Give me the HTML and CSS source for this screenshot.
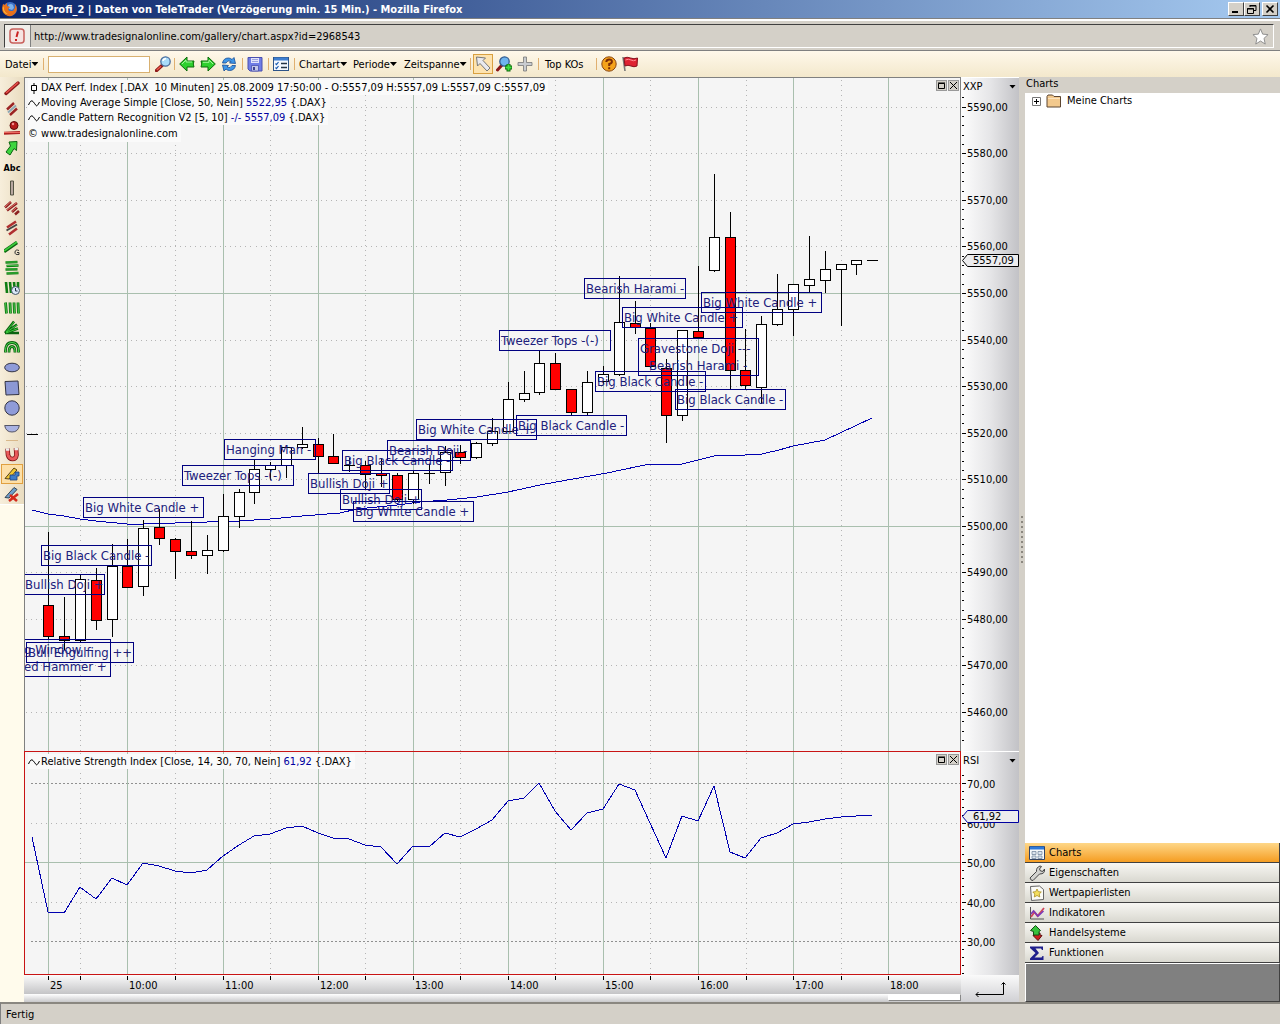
FILE: index.html
```html
<!DOCTYPE html>
<html lang="de">
<head>
<meta charset="utf-8">
<title>Dax_Profi_2 | Daten von TeleTrader</title>
<link rel="stylesheet" href="styles.css">
</head>
<body>
<header class="titlebar">
  <svg class="ico" viewBox="0 0 16 16"><circle cx="8" cy="8" r="7" fill="#3d6fc4"/><path d="M6 4q3-2 5 0l1 3-2 2-3-1z" fill="#7db2ec"/><path d="M1 3l2 1 2-2 0 3 3 1-2 2 1 2 4 0 2-3 0-4q3 4 1 8-3 5-8 4-6-2-6-8z" fill="#e8701a"/><path d="M2 5q-1 6 4 8-5 0-5-6z" fill="#f9c13c"/></svg>
  <h1 class="titlebar-text">Dax_Profi_2 | Daten von TeleTrader (Verzögerung min. 15 Min.) - Mozilla Firefox</h1>
  <button class="winbtn" aria-label="Minimieren"><svg viewBox="0 0 12 10"><path d="M2 8h6" stroke="#000" stroke-width="2"/></svg></button>
  <button class="winbtn" aria-label="Verkleinern"><svg viewBox="0 0 12 10"><path d="M4 1.500h6v5h-2M4 1v2M4 2h6M1.500 4.500h6v5h-6zM1 5h7" fill="none" stroke="#000"/></svg></button>
  <button class="winbtn winbtn-close" aria-label="Schließen"><svg viewBox="0 0 12 10"><path d="M2.500 1.500l7 7M9.500 1.500l-7 7" stroke="#000" stroke-width="1.600"/></svg></button>
</header>

<div class="location">
  <div class="location-box">
    <span class="location-icon"><svg class="ico" viewBox="0 0 16 16"><rect x="1" y="1" width="14" height="14" rx="3" fill="#f6e4e2" stroke="#c8605c" stroke-width="1.500"/><path d="M9 3.500L7.500 9M7 11v2" stroke="#c22" stroke-width="2"/></svg></span>
    <input class="location-input" type="text" aria-label="Adresse" value="http://www.tradesignalonline.com/gallery/chart.aspx?id=2968543">
    <svg class="star" viewBox="0 0 18 18"><path d="M9 1l2.300 5.500 5.700.5-4.300 4 1.300 6L9 13.800 4 17l1.300-6L1 7l5.700-.5z" fill="#fff" stroke="#8b8b8b"/></svg>
  </div>
</div>

<nav class="toolbar">
  <button class="menu menu-file">Datei<i class="caret"></i></button>
  <i class="sep"></i>
  <input class="search" type="text" aria-label="Suche">
  <button class="tool" aria-label="Suchen"><svg class="ico" viewBox="0 0 16 16"><path d="M1.500 14.500L7 9.500" stroke="#8c1818" stroke-width="3.400" stroke-linecap="round"/><path d="M1.800 14L6 10.200" stroke="#ee5a4a" stroke-width="1.400"/><circle cx="10.500" cy="5.500" r="4.700" fill="#a8dcfa" stroke="#4a6c9c" stroke-width="1.300"/><path d="M8 5q0-2 3-2.500" stroke="#fff" stroke-width="1.500" fill="none"/></svg></button>
  <i class="sep sep-tight"></i>
  <button class="tool" aria-label="Zurück"><svg class="ico" viewBox="0 0 16 16"><path d="M.7 8L8 1v4h7q-1.500 3 0 6H8v4z" fill="#2fd02f" stroke="#0a6a0a"/><path d="M3 8l4-4v2h6" stroke="#a4f59c" fill="none"/></svg></button>
  <button class="tool" aria-label="Vor"><svg class="ico" viewBox="0 0 16 16"><path d="M15.300 8L8 1v4H1q1.500 3 0 6h7v4z" fill="#2fd02f" stroke="#0a6a0a"/><path d="M3 6.300h6V4l4 4" stroke="#a4f59c" fill="none"/></svg></button>
  <button class="tool" aria-label="Aktualisieren"><svg class="ico" viewBox="0 0 16 16"><path d="M1.500 7q1-5 6-5 2 0 3.500 1.500L13 1.500 14.500 7.500 8.500 7l1.500-1.500q-3.500-2-5 1.500z" fill="#3d96e8" stroke="#154a94" stroke-width=".8"/><path d="M14.500 9.500q-1 5-6 5-2 0-3.500-1.500L3 15 1.500 9l6 .5L6 11q3.500 2 5-1.500z" fill="#3d96e8" stroke="#154a94" stroke-width=".8"/></svg></button>
  <i class="sep"></i>
  <button class="tool" aria-label="Speichern"><svg class="ico" viewBox="0 0 16 16"><path d="M1 1.500h14V15H3l-2-2z" fill="#6f7de6" stroke="#4a50b0"/><path d="M4 2h8v5H4z" fill="#e2e4fa"/><path d="M4.500 9.500h7V15h-7z" fill="#c4c8e8" stroke="#4a50b0" stroke-width=".8"/><path d="M6 11h2v3H6z" fill="#3c4090"/><path d="M5 3.500h6M5 5.500h6" stroke="#9ba2e0"/></svg></button>
  <i class="sep"></i>
  <button class="tool" aria-label="Liste"><svg class="ico" viewBox="0 0 16 16"><rect x=".5" y="1.500" width="15" height="13" fill="#f4f8fe" stroke="#2d5488"/><path d="M1 3h14" stroke="#3f7fd0" stroke-width="3"/><path d="M2.500 7.500l1 1 2-2.500M2.500 11.500l1 1 2-2.500" fill="none" stroke="#175ab0" stroke-width="1.200"/><path d="M8 7.500h6M8 11.500h6" stroke="#234" stroke-width="1.300"/></svg></button>
  <i class="sep"></i>
  <button class="menu menu-type">Chartart<i class="caret"></i></button>
  <button class="menu menu-period">Periode<i class="caret"></i></button>
  <button class="menu menu-span">Zeitspanne<i class="caret"></i></button>
  <i class="sep"></i>
  <button class="tool tool-on" aria-label="Zeiger"><svg class="ico" viewBox="0 0 16 16"><path d="M1.500 1l9 1-2.500 2.500 7 7.500-3 3-7-7.500L2.500 10z" fill="#e9e9ee" stroke="#777"/></svg></button>
  <button class="tool" aria-label="Vergrößern"><svg class="ico" viewBox="0 0 16 16"><path d="M1.500 14L6 9" stroke="#8c1818" stroke-width="3" stroke-linecap="round"/><circle cx="8.500" cy="5.500" r="4.700" fill="#6fb4ee" stroke="#345c90" stroke-width="1.300"/><path d="M9 11.500h7M12.500 8v7.500" stroke="#0a6a0a" stroke-width="4"/><path d="M9.500 11.500h6M12.500 8.500v6" stroke="#43e043" stroke-width="2"/></svg></button>
  <button class="tool" aria-label="Fadenkreuz"><svg class="ico" viewBox="0 0 16 16"><path d="M6.500 1h3v5.500H15v3H9.500V15h-3V9.500H1v-3h5.500z" fill="#c9ccd0" stroke="#777" stroke-width=".8"/></svg></button>
  <i class="sep"></i>
  <button class="menu menu-kos">Top KOs</button>
  <i class="sep"></i>
  <button class="tool" aria-label="Hilfe"><svg class="ico" viewBox="0 0 16 16"><circle cx="8" cy="8" r="7.200" fill="#f5a31b" stroke="#8a4510"/><path d="M5.300 6q.2-2.500 2.900-2.500t2.700 2.200Q10.900 7.300 8.200 8v2M8.200 11.300v2" fill="none" stroke="#7c2c06" stroke-width="2"/></svg></button>
  <button class="tool" aria-label="Markieren"><svg class="ico" viewBox="0 0 16 16"><path d="M1 1l2 14" stroke="#777" stroke-width="1.600"/><path d="M2 2q3-1.500 6.500 0t7 0l-.5 8q-3 1.500-6 0t-6 0z" fill="#df2333" stroke="#86101c"/><path d="M3.500 4q3-1.500 5.500 0t5 0" stroke="#ff8d93" fill="none"/></svg></button>
</nav>

<main class="workspace">
  <aside class="tools">
    <div class="tools-list">
      <button class="draw" aria-label="Trendlinie"><svg class="ico" viewBox="0 0 16 16"><path d="M2 13.500L14 3" stroke="#8c1a1a" stroke-width="3.400" stroke-linecap="round"/><path d="M2 13L14 2.500" stroke="#e8504a" stroke-width="1.600"/></svg></button>
      <button class="draw" aria-label="Parallelen"><svg class="ico" viewBox="0 0 16 16"><path d="M3 9.500L10 3M6 15l7-6.500" stroke="#9c2424" stroke-width="2.400"/><path d="M4 12.500l8-7" stroke="#8fa8b4" stroke-width="2"/></svg></button>
      <button class="draw" aria-label="Horizontale"><svg class="ico" viewBox="0 0 16 16"><circle cx="10" cy="5.500" r="4" fill="#b61c1c" stroke="#5c0a0a"/><circle cx="9" cy="4" r="1.200" fill="#f09090"/><path d="M0 13.200l16-.7" stroke="#b02222" stroke-width="3"/><path d="M0 12.500h16" stroke="#ec6a60"/></svg></button>
      <button class="draw" aria-label="Pfeil"><svg class="ico" viewBox="0 0 16 16"><path d="M5 2l8-.5-.5 9-2.500-2L6 15l-4-3 4.500-6z" fill="#3ed63e" stroke="#0b6410"/></svg></button>
      <button class="draw draw-text">Abc</button>
      <button class="draw" aria-label="Vertikale"><svg class="ico" viewBox="0 0 16 16"><path d="M6.500 1h3v14h-3z" fill="#b8a8a0" stroke="#554"/></svg></button>
      <button class="draw" aria-label="Kanal"><svg class="ico" viewBox="0 0 16 16"><path d="M1 7.500L7 2M3 10.500L13 3M8 12l5-4.500M11 14.500l4-3.500" stroke="#8c2020" stroke-width="2.600"/><path d="M1 7L7 1.500M3 10L13 2.500M8 11.500L13 7" stroke="#e07068"/></svg></button>
      <button class="draw" aria-label="Regression"><svg class="ico" viewBox="0 0 16 16"><path d="M3 7.500L12 1.500M5 14.500l8-6" stroke="#b03030" stroke-width="2.600"/><path d="M2.500 10.500L13 4.500" stroke="#444" stroke-width="2"/></svg></button>
      <button class="draw" aria-label="Gann"><svg class="ico" viewBox="0 0 16 16"><path d="M0 11.500L13 2.500" stroke="#0b6410" stroke-width="3.600"/><path d="M0 11L13 2" stroke="#3ccc3c" stroke-width="1.600"/><path d="M15 10.500q-3.500-1.500-4 1.500t4 2.500v-2h-2" fill="none" stroke="#333"/></svg></button>
      <button class="draw" aria-label="Retracement"><svg class="ico" viewBox="0 0 16 16"><path d="M1.500 2.500l12-.5M2.500 6l12-.5M1.500 9.500l12-.3M2.500 13.500l12-.5" stroke="#0f7d14" stroke-width="2.600"/><path d="M2 2h11M2.500 5.500H14M2 9h11M3 13h11" stroke="#4fc84f" stroke-width=".8"/></svg></button>
      <button class="draw" aria-label="Zeitzonen"><svg class="ico" viewBox="0 0 16 16"><path d="M2 2l1 11M6 2l1 11M10 2l1 11M14 2v6" stroke="#0f7d14" stroke-width="2.600"/><circle cx="11.500" cy="10.500" r="4" fill="#dbe8f8" stroke="#456"/><path d="M11.500 8v3h2" stroke="#234" fill="none"/></svg></button>
      <button class="draw" aria-label="Zyklen"><svg class="ico" viewBox="0 0 16 16"><path d="M1.500 2.500l1 11M6 2.500l.5 11M10 2.500l.5 11M14 2.500l.5 11" stroke="#0f7d14" stroke-width="2.800"/><path d="M1.500 3l1 10M6 3l.5 10M10 3l.5 10M14 3l.5 10" stroke="#4fc84f" stroke-width=".9"/></svg></button>
      <button class="draw" aria-label="Fächer"><svg class="ico" viewBox="0 0 16 16"><path d="M1 13L10 1.500M1 13L13 4.500M1 13l13-4.500M1 13h14" stroke="#0b6410" stroke-width="2.600"/><path d="M2 12L10 2M2 12.500L13 5M2 13l12-4.500" stroke="#3ccc3c"/></svg></button>
      <button class="draw" aria-label="Bögen"><svg class="ico" viewBox="0 0 16 16"><path d="M1.500 12.500q-.5-10 6.500-10t6.500 10M5 12.500q0-6 3-6t3 6" fill="none" stroke="#0b6410" stroke-width="2.800"/><path d="M1.500 12q-.5-9.500 6.500-9.500T14.500 12M5 12q0-5.500 3-5.500t3 5.500" fill="none" stroke="#4fd44f"/></svg></button>
      <button class="draw" aria-label="Ellipse"><svg class="ico" viewBox="0 0 16 16"><ellipse cx="8" cy="7.500" rx="7.300" ry="4.300" fill="#8f9bd8" stroke="#334"/></svg></button>
      <button class="draw" aria-label="Rechteck"><svg class="ico" viewBox="0 0 16 16"><path d="M1 1.500l13-.5 1 13.500-13 .5z" fill="#8c98d4" stroke="#334"/></svg></button>
      <button class="draw" aria-label="Kreis"><svg class="ico" viewBox="0 0 16 16"><circle cx="8" cy="8" r="7.200" fill="#8f9bd8" stroke="#334"/></svg></button>
      <button class="draw" aria-label="Halbkreis"><svg class="ico" viewBox="0 0 16 16"><path d="M.7 5.500h14.600q-1 6.500-7.300 6.500T.7 5.500z" fill="#a9b2e2" stroke="#556"/></svg></button>
      <i class="tools-sep"></i>
      <button class="draw" aria-label="Magnet"><svg class="ico" viewBox="0 0 16 16"><path d="M3.500 2.500l.5 6.500q1 4 4.500 4t4-4l-.5-7" fill="none" stroke="#7c1212" stroke-width="4.600"/><path d="M3.500 4l.5 5q1 4 4.500 4t4-4l-.5-6" fill="none" stroke="#ea5a5a" stroke-width="3"/><path d="M1.800 3.500h3.600M10.500 3h3.600" stroke="#eee" stroke-width="2.600"/></svg></button>
      <button class="draw draw-on" aria-label="Zeichnen"><svg class="ico" viewBox="0 0 16 16"><path d="M1 12.500L10 2l3 2L5 13z" fill="#f2c630" stroke="#54431a"/><path d="M6 9h5V6h4v4h-2v4H6z" fill="#3f7cc8" stroke="#1c3f78" stroke-width=".8"/></svg></button>
      <button class="draw" aria-label="Löschen"><svg class="ico" viewBox="0 0 16 16"><path d="M1 11.500L10 1.500l3 2L5 12z" fill="#6fa0cc" stroke="#345"/><path d="M6 9l7 6M14 8l-9 7" stroke="#d42a1c" stroke-width="2.600"/></svg></button>
    </div>
  </aside>

  <section class="charts">
    <div class="pane">
      <svg class="plot" id="price-plot"></svg>
      <div class="pane-head">
        <div class="legend">
          <p class="legend-row"><svg class="mark" viewBox="0 0 12 12"><path d="M6 1v2M6 9v3M3.500 3.500h5v5h-5z" fill="none" stroke="#000"/></svg><span>DAX Perf. Index [.DAX&nbsp; 10 Minuten] 25.08.2009 17:50:00 - O:5557,09 H:5557,09 L:5557,09 C:5557,09</span></p>
          <p class="legend-row"><svg class="mark" viewBox="0 0 12 12"><path d="M.5 8Q3 2 5 4.500T8 8.500 11.500 5" fill="none" stroke="#000"/></svg><span>Moving Average Simple [Close, 50, Nein] <b class="val">5522,95</b> {.DAX}</span></p>
          <p class="legend-row"><svg class="mark" viewBox="0 0 12 12"><path d="M.5 8Q3 2 5 4.500T8 8.500 11.500 5" fill="none" stroke="#000"/></svg><span>Candle Pattern Recognition V2 [5, 10] <b class="val">-/- 5557,09</b> {.DAX}</span></p>
          <p class="legend-row legend-copy">© www.tradesignalonline.com</p>
        </div>
        <div class="pane-btns">
          <button class="panebtn" aria-label="Maximieren"><svg viewBox="0 0 9 9"><path d="M1.500 2.500h6v5h-6zM1 2h7" fill="none" stroke="#000"/></svg></button>
          <button class="panebtn" aria-label="Schließen"><svg viewBox="0 0 9 9"><path d="M1 1l7 7M8 1l-7 7" stroke="#000"/></svg></button>
        </div>
      </div>
    </div>
    <div class="scale">
      <svg class="plot" id="price-scale"></svg>
      <button class="scale-head">XXP<i class="caret"></i></button>
    </div>
    <div class="pane pane-active">
      <svg class="plot" id="rsi-plot"></svg>
      <div class="pane-head">
        <div class="legend">
          <p class="legend-row"><svg class="mark" viewBox="0 0 12 12"><path d="M.5 8Q3 2 5 4.500T8 8.500 11.500 5" fill="none" stroke="#000"/></svg><span>Relative Strength Index [Close, 14, 30, 70, Nein] <b class="val">61,92</b> {.DAX}</span></p>
        </div>
        <div class="pane-btns">
          <button class="panebtn" aria-label="Maximieren"><svg viewBox="0 0 9 9"><path d="M1.500 2.500h6v5h-6zM1 2h7" fill="none" stroke="#000"/></svg></button>
          <button class="panebtn" aria-label="Schließen"><svg viewBox="0 0 9 9"><path d="M1 1l7 7M8 1l-7 7" stroke="#000"/></svg></button>
        </div>
      </div>
    </div>
    <div class="scale">
      <svg class="plot" id="rsi-scale"></svg>
      <button class="scale-head">RSI<i class="caret"></i></button>
    </div>
    <div class="time">
      <svg class="time-axis" id="time-axis"></svg>
      <div class="time-scroll"><i class="time-thumb"></i></div>
    </div>
    <div class="corner"><svg viewBox="0 0 32 18"><path d="M29.500 3v11.500H2M27.500 4.500l2-2 2 2M4.500 12L2 14.500 4.500 17" fill="none" stroke="#000"/></svg></div>
  </section>

  <div class="splitter"><i class="grip"></i></div>

  <aside class="dock">
    <h2 class="dock-head">Charts</h2>
    <div class="tree">
      <button class="expander" aria-label="Aufklappen"><svg viewBox="0 0 9 9"><path d="M.5.5h8v8h-8z" fill="#fff" stroke="#777"/><path d="M2 4.500h5M4.500 2v5" stroke="#000"/></svg></button>
      <svg class="ico" viewBox="0 0 16 14"><path d="M1 13V2.500L2 1h4.500L8 2.500h6.500V13z" fill="#f3c98d" stroke="#5c4632"/><path d="M2 4.500h12" stroke="#fbe3bf"/></svg>
      <span>Meine Charts</span>
    </div>
    <div class="dock-menu">
      <button class="item item-on"><svg class="ico" viewBox="0 0 16 16"><path d="M.5 1.500h15v13H.5z" fill="#f6f8fb" stroke="#346"/><path d="M1 3h14" stroke="#2d78d8" stroke-width="3"/><path d="M3 6.500h4v3H3zM9 6.500h4v3H9zM3 11h4v2.500H3zM9 11h4v2.500H9z" fill="#dde4ee" stroke="#788aa2" stroke-width=".8"/></svg>Charts</button>
      <button class="item"><svg class="ico" viewBox="0 0 16 16"><path d="M1 13l6.500-6.500Q7 2.500 11 1l1.500.5-2 2.500 1 2 2.500.3L15.500 4q.8 5-5 5L4 15.500q-2 .5-3-2.500z" fill="#d3d3d0" stroke="#444"/></svg>Eigenschaften</button>
      <button class="item"><svg class="ico" viewBox="0 0 16 16"><path d="M1.500 1.500l9-.5 4 3.500v10l-12 1z" fill="#fbfbf6" stroke="#666"/><path d="M8 4l1.300 2.700 3 .3-2.100 2 .6 3L8 10.500 5.300 12l.5-3-2-2 2.900-.3z" fill="#f5df5e" stroke="#a98e22" stroke-width=".8"/></svg>Wertpapierlisten</button>
      <button class="item"><svg class="ico" viewBox="0 0 16 16"><path d="M1.500 2v12H15" stroke="#555" fill="none"/><path d="M2 12l3.500-5 3 4L15 3" fill="none" stroke="#d0455a" stroke-width="1.800"/><path d="M2 9l2.500-3L9 11l5.500-5" fill="none" stroke="#7a3ab8" stroke-width="1.600"/></svg>Indikatoren</button>
      <button class="item"><svg class="ico" viewBox="0 0 16 16"><path d="M4 10.500l2-.5V8h5v2l2 .5-4 5z" fill="#cc2020" stroke="#5c0d0d"/><path d="M1.500 5.500l5-5 5 5-1.500 1v3.500H4.500V6.500z" fill="#37c23c" stroke="#124f14"/></svg>Handelsysteme</button>
      <button class="item"><svg class="ico" viewBox="0 0 16 16"><path d="M1 1.500h13V5h-1l-1-1.500H6.500L10 8l-4.500 4.500H12.500L13.500 11h1v4H1v-1.500L6.500 8 1 3z" fill="#1f1f8c"/></svg>Funktionen</button>
    </div>
    <div class="dock-foot"></div>
  </aside>
</main>

<footer class="status">Fertig</footer>
<script src="chart.js"></script>
</body>
</html>
```
FILE: styles.css
```css
* { box-sizing: border-box; }
body {
  margin: 0;
  min-height: 100vh;
  display: flex;
  flex-direction: column;
  background: #d4d0c8;
  color: #000;
  font: 11px/15px "DejaVu Sans Condensed", "DejaVu Sans", sans-serif;
}
button, input { font: inherit; color: inherit; }
button { display: flex; align-items: center; margin: 0; padding: 0; border: 0; background: none; }
h1, h2, p { margin: 0; font: inherit; }
.ico { width: 16px; height: 16px; flex: none; }

.titlebar {
  display: flex;
  align-items: center;
  height: 19px;
  padding: 0 2px;
  background: linear-gradient(90deg, #0a246a, #a6caf0);
  border-bottom: 1px solid #808080;
  color: #fff;
}
.titlebar-text { flex: 1; padding-left: 2px; font-weight: bold; white-space: nowrap; }
.winbtn {
  width: 16px;
  height: 14px;
  justify-content: center;
  background: #d4d0c8;
  border: 1px solid;
  border-color: #fff #404040 #404040 #fff;
}
.winbtn svg { width: 12px; height: 10px; }
.winbtn-close { margin-left: 2px; }

.location { padding: 3px 6px 2px 4px; height: 32px; border-top: 2px solid #fff; border-bottom: 1px solid #808080; }
.location-box {
  display: flex;
  align-items: center;
  height: 24px;
  padding-right: 4px;
  border: 1px solid;
  border-color: #404040 #fff #fff #404040;
}
.location-icon { display: flex; align-items: center; width: 26px; height: 22px; padding-left: 4px; background: #f0eeea; border-right: 1px solid #808080; }
.location-input { flex: 1; min-width: 0; height: 20px; padding: 0 3px; border: 0; background: transparent; }
.star { width: 17px; height: 17px; flex: none; }

.toolbar {
  display: flex;
  align-items: center;
  gap: 5px;
  height: 26px;
  padding-left: 5px;
  background: linear-gradient(#fff8ea, #f3e8cc);
}
.caret { width: 7px; height: 4px; background: #000; clip-path: polygon(0 0, 100% 0, 50% 100%); flex: none; }
.menu { gap: 0; white-space: nowrap; flex: none; }
.menu-file { width: 33px; }
.menu-type { width: 49px; }
.menu-period { width: 46px; }
.menu-span { width: 61px; }
.menu-kos { width: 44px; margin: 0 2px; }
.sep { width: 1px; height: 12px; margin-right: -1px; background: #e0b070; flex: none; }
.sep-tight { margin-left: -2px; }
.search { width: 102px; height: 17px; border: 1px solid #d8b070; background: #fff; }
.tool { flex: none; }
.tool-on { padding: 1px; margin: 0 -2px; border: 1px solid #d9a040; background: #fde3b0; }

.workspace { flex: 1; display: flex; min-height: 600px; }
.tools { width: 24px; background: #fffbec; }
.tools-list { padding-top: 1px; background: linear-gradient(90deg, #f7eedb, #e9dcc0); border-bottom: 1px solid #fff; }
.draw { width: 22px; height: 20px; margin-left: 1px; justify-content: center; }
.draw-text { font-size: 9px; font-weight: bold; }
.draw-on { border: 1px solid #e0a040; background: #fde0a8; }
.tools-sep { display: block; width: 12px; height: 1px; margin: 2px 6px 3px; background: #d8b88a; }

.charts {
  flex: 1;
  min-width: 0;
  display: grid;
  grid-template-columns: minmax(0, 1fr) 58px;
  grid-template-rows: minmax(0, 674fr) minmax(0, 224fr) 27px;
}
.pane { display: grid; min-height: 0; background: #f5f5f5; border: 1px solid #808080; border-bottom: 0; }
.pane-active { border: 1px solid #c81414; }
.plot, .pane-head, .scale-head { grid-area: 1 / 1; }
.plot { width: 100%; height: 100%; overflow: hidden; }
.pane-head { display: flex; justify-content: space-between; align-items: flex-start; padding: 2px 0 0 3px; }
.legend { display: flex; flex-direction: column; align-items: flex-start; }
.legend-row { display: flex; align-items: center; gap: 1px; height: 15px; padding-right: 3px; background: #fafafa; white-space: nowrap; }
.legend-copy { height: 17px; }
.mark { width: 12px; height: 12px; }
.val { font-weight: normal; color: #0000a0; }
.pane-btns { display: flex; gap: 1px; padding: 0 1px 0 0; }
.panebtn { width: 11px; height: 11px; justify-content: center; background: #d4d0c8; border: 1px solid #999; }
.panebtn svg { width: 9px; height: 9px; }

.scale { display: grid; min-height: 0; background: linear-gradient(90deg, #fdfdfd, #e6e6e8 50%, #c2c2c6); border-top: 1px solid #fff; }
.scale-head { align-self: start; justify-content: space-between; height: 17px; padding: 0 3px 0 2px; }
.time { min-width: 0; display: flex; flex-direction: column; }
.time-axis { width: 100%; height: 19px; background: linear-gradient(#fbfbfb, #c4c4c6); overflow: hidden; }
.time-scroll { display: flex; justify-content: flex-end; height: 8px; background: linear-gradient(#fff, #c8c8ca); }
.time-thumb { width: 73px; height: 7px; background: #fff; border: 1px solid #fff; border-bottom-color: #888; border-right-color: #888; }
.corner { display: flex; align-items: center; justify-content: center; background: linear-gradient(#fafafa, #d0d0d4); }
.corner svg { width: 32px; height: 18px; }

.splitter { width: 6px; display: flex; align-items: center; justify-content: center; background: #d4d0c8; }
.grip { width: 2px; height: 48px; background: repeating-linear-gradient(#8c8880 0 2px, transparent 2px 5px); }

.dock { width: 255px; display: flex; flex-direction: column; background: #fff; }
.dock-head { height: 16px; padding-left: 1px; line-height: 14px; background: #d4d0c8; }
.tree { flex: 1; display: flex; align-items: flex-start; gap: 5px; padding: 0 7px; line-height: 16px; }
.expander { height: 16px; }
.expander svg { width: 9px; height: 9px; }
.dock-menu { display: flex; flex-direction: column; }
.item {
  height: 20px;
  gap: 4px;
  padding: 0 4px;
  background: linear-gradient(#f8f7f3, #d9d8d0);
  border-bottom: 1px solid #404040;
  border-right: 1px solid #404040;
}
.item-on { background: linear-gradient(#fed788, #f59d22); }
.dock-foot { height: 39px; background: #808080; border: 1px solid #404040; border-top-color: #fff; border-left-color: #fff; }

.status { height: 22px; padding: 3px 6px 0 5px; border-top: 2px solid #8a8780; border-left: 1px solid #808080; }

.hair { shape-rendering: crispEdges; }
.grid-solid { fill: #a9bfae; }
.grid-dots { stroke: #b4b4b4; stroke-dasharray: 1 4; fill: none; }
.grid-limit { stroke: #909090; stroke-dasharray: 2 2; fill: none; }
.ink { fill: #000; }
.up { fill: #fff; }
.down { fill: #f00; }
.curve { fill: none; stroke: #0000b0; }
.tag-box { fill: none; stroke: #000080; }
.tag-text { fill: #20207c; font-size: 13px; }
.axis-text { font-size: 11px; }
.flag { fill: #ececee; stroke: #000; }
.flag-rsi { stroke: #0000a0; }
```
FILE: chart.js
```
const NS = "http://www.w3.org/2000/svg";

// Each drawing surface keeps the shared canvas coordinates through its own origin.
function surface(id, x, y) {
  const g = document.createElementNS(NS, "g");
  g.setAttribute("transform", `translate(${-x} ${-y})`);
  document.getElementById(id).append(g);
  return g;
}
function add(g, name, attrs, text) {
  const el = document.createElementNS(NS, name);
  for (const key in attrs) el.setAttribute(key, attrs[key]);
  if (text) el.textContent = text;
  g.append(el);
}
const bar = (g, x, y, width, height, cls) =>
  add(g, "rect", { x, y, width, height, class: "hair " + cls });
const line = (g, x1, y1, x2, y2, cls) =>
  add(g, "path", { d: `M${x1 + 0.5} ${y1 + 0.5}L${x2 + 0.5} ${y2 + 0.5}`, class: "hair " + cls });
const label = (g, x, y, text, cls) => add(g, "text", { x, y, class: cls }, text);
const curve = (g, points) => add(g, "polyline", { points, class: "curve hair" });

const hours = [48, 127, 223, 318, 413, 508, 603, 698, 793, 888];
const halves = [80, 175, 270, 365, 460, 555, 650, 746, 841];
const hourNames = ["25", "10:00", "11:00", "12:00", "13:00", "14:00", "15:00", "16:00", "17:00", "18:00"];

const price = surface("price-plot", 25, 78);
const rsi = surface("rsi-plot", 25, 752);
const priceScale = surface("price-scale", 961, 78);
const rsiScale = surface("rsi-scale", 961, 752);
const time = surface("time-axis", 24, 975);

const priceY = p => Math.round(293 + (5550 - p) * 4.655);
const rsiY = v => Math.round(862 + (50 - v) * 3.95);

halves.forEach(x => { line(price, x, 79, x, 752, "grid-dots"); line(rsi, x, 752, x, 974, "grid-dots"); });
for (let p = 5460; p <= 5590; p += 10)
  if (p % 50) line(price, 25, priceY(p), 960, priceY(p), "grid-dots");
  else bar(price, 25, priceY(p), 936, 1, "grid-solid");
for (let v = 30; v <= 70; v += 10)
  if (v === 50) bar(rsi, 25, rsiY(v), 936, 1, "grid-solid");
  else line(rsi, 30, rsiY(v), 960, rsiY(v), v % 40 === 30 ? "grid-limit" : "grid-dots");
hours.forEach(x => { bar(price, x, 78, 1, 674, "grid-solid"); bar(rsi, x, 752, 1, 223, "grid-solid"); });

// x, high, body top, body bottom, low, falling
const candles = [
  [48,532,605,636,638,1],[64,597,636,640,649,1],[80,574,579,640,641,0],[96,568,580,620,629,1],
  [112,544,566,619,636,0],[127,539,566,587,587,1],[143,520,528,586,595,0],[159,509,527,538,544,1],
  [175,538,539,551,578,1],[191,521,551,555,558,1],[207,535,550,555,573,0],[223,494,516,550,551,0],
  [239,489,492,516,527,0],[254,459,469,492,503,0],[270,462,465,469,479,0],[286,447,447,465,477,0],
  [302,427,444,447,448,0],[318,438,444,456,472,1],[333,434,456,463,463,1],[349,458,465,465,471,0],
  [365,461,465,474,488,1],[381,458,473,475,486,1],[397,473,475,499,500,1],[413,470,473,499,503,0],
  [429,464,473,473,483,0],[445,446,452,472,485,0],[460,445,452,457,463,1],[476,442,443,457,458,0],
  [492,418,431,443,445,0],[508,382,399,431,431,0],[524,371,393,399,401,0],[539,350,363,392,394,0],
  [555,353,363,389,389,1],[571,389,389,412,414,1],[587,371,382,412,415,0],[603,366,374,381,383,0],
  [619,276,322,374,375,0],[635,301,323,327,333,1],[650,323,328,366,367,1],[666,359,368,415,442,1],
  [682,330,330,415,420,0],[698,266,331,337,338,1],[714,174,237,270,271,0],[730,212,237,370,389,1],
  [745,329,370,385,389,1],[761,316,324,387,403,0],[777,274,309,324,325,0],[793,284,284,309,335,0],
  [809,236,279,285,291,0],[825,251,269,280,292,0],[841,264,264,269,325,0],[856,260,260,264,274,0],
  [872,260,260,260,260,0]
];
curve(price, "32,510 48,514 64,516 80,519 96,521 127,524 143,524 175,523 207,522 239,521 270,519 302,516 340,513 357,509 397,505 420,502 447,500 477,497 508,492 540,485 573,479 607,473 640,466 650,464 682,464 698,460 714,456 745,455 762,454 779,450 793,446 825,440 872,418");
bar(price, 27, 434, 11, 1, "ink");
for (const [x, high, top, bottom, low, falling] of candles) {
  bar(price, x, high, 1, low - high + 1, "ink");
  bar(price, x - 5, top, 11, bottom - top + 1, "ink");
  if (bottom - top > 1) bar(price, x - 4, top + 1, 9, bottom - top - 1, falling ? "down" : "up");
}

// x, y, width, one or more lines of [indent, text]
const W = "Big White Candle +", B = "Big Black Candle -", T = "Tweezer Tops -(-)", D = "Bullish Doji +";
const tags = [
  [83,497,120,[2,W]],[41,545,110,[2,B]],[20,574,84,[5,D]],[20,639,90,[4,"g Window --"],[4,"ed Hammer +"]],
  [26,642,107,[2,"Bull Engulfing ++"]],[182,465,111,[2,T]],[224,439,91,[2,"Hanging Man -"]],
  [308,473,81,[2,D]],[342,450,110,[2,B]],[387,440,83,[2,"Bearish Doji -"]],[340,489,81,[2,D]],
  [353,501,120,[2,W]],[416,419,120,[2,W]],[516,415,110,[2,B]],[499,330,111,[2,T]],
  [584,278,101,[2,"Bearish Harami -"]],[622,307,120,[2,W]],[701,292,120,[2,W]],
  [638,338,120,[2,"Gravestone Doji ---"],[11,"Bearish Harami -"]],[595,371,110,[2,B]],[675,389,110,[2,B]]
];
for (const [x, y, width, ...rows] of tags) {
  add(price, "rect", { x: x + 0.5, y: y + 0.5, width, height: 3 + 17 * rows.length, class: "tag-box hair" });
  rows.forEach(([dx, text], i) => label(price, x + dx, y + 15 + 17 * i, text, "tag-text"));
}

curve(rsi, "32,837 48,912 64,913 80,887 96,899 112,878 127,885 143,863 159,866 175,871 191,873 207,870 223,856 239,845 254,836 270,834 286,828 302,826 318,833 333,838 349,839 365,845 381,847 397,864 413,846 429,847 445,833 460,837 476,829 492,820 508,801 524,798 539,783 555,811 571,830 587,813 603,809 619,784 635,790 650,823 666,858 682,816 698,821 714,786 730,852 745,858 761,838 777,833 793,824 809,822 825,819 841,817 856,816 872,815");

for (let p = 5454; p <= 5592; p += 2) bar(priceScale, 962, priceY(p), p % 10 ? 2 : 4, 1, "ink");
for (let p = 5460; p <= 5590; p += 10) label(priceScale, 967, priceY(p) + 4, p + ",00", "axis-text");
for (let v = 22; v <= 72; v += 2) bar(rsiScale, 962, rsiY(v), v % 10 ? 2 : 4, 1, "ink");
for (let v = 30; v <= 70; v += 10) label(rsiScale, 967, rsiY(v) + 5, v + ",00", "axis-text");

function flag(g, y, text, cls) {
  add(g, "path", { d: `M962.5 ${y}.5l5-6h51v12h-51z`, class: "flag " + cls });
  label(g, 973, y + 4, text, "axis-text");
}
flag(priceScale, 260, "5557,09", "");
flag(rsiScale, 816, "61,92", "flag-rsi");

[...hours, ...halves].forEach(x => bar(time, x, 976, 1, 4, "ink"));
hours.forEach((x, i) => label(time, x + 2, 989, hourNames[i], "axis-text"));
```
